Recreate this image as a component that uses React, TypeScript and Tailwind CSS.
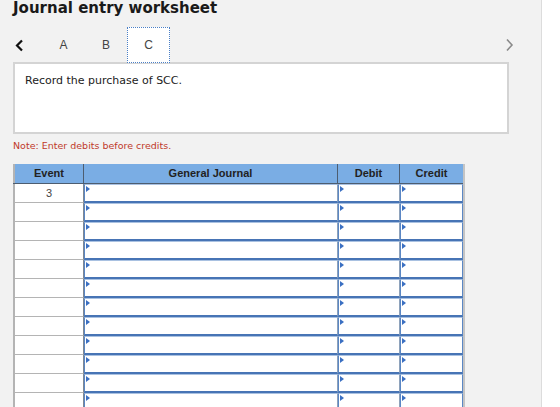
import React from "react";

const verdana = { fontFamily: '"DejaVu Sans", Verdana, sans-serif' };
const arial = { fontFamily: '"Liberation Sans", Arial, sans-serif' };

function InputCell({ last }: { last?: boolean }) {
  return (
    <div
      className={`relative h-[19px] bg-white border-t border-t-[#a9c1e1] border-b-2 border-b-[#4774b5] border-l border-l-[#5b87c4] ${
        last ? "border-r border-r-[#5b87c4]" : "border-r border-r-[#8ea2bb]"
      }`}
    >
      <div className="absolute top-[1px] left-[1px] w-0 h-0 border-y-[3px] border-y-transparent border-l-[4px] border-l-[#3a6fc2]" />
    </div>
  );
}

export default function App() {
  const rows = Array.from({ length: 12 }, (_, i) => i);
  return (
    <div className="w-[560px] h-[407px] overflow-hidden flex bg-white">
      <div className="w-[542px] shrink-0 bg-[#f2f2f2] border-r border-[#dcdcdc] pl-[13px]">
        <div
          className="text-[15px] leading-[17px] font-bold text-[#1a1a1a]"
          style={verdana}
        >
          Journal entry worksheet
        </div>

        <div className="mt-[10px] flex items-stretch h-[36px] w-[495px]" style={arial}>
          <div className="w-[29px] flex items-center pl-[2px]">
            <svg width="9" height="13" viewBox="0 0 9 13">
              <path d="M7 1.5 L2 6.5 L7 11.5" fill="none" stroke="#111" strokeWidth="2.2" />
            </svg>
          </div>
          <div className="w-[43px] flex items-center justify-center text-[12px] text-[#444]">A</div>
          <div className="w-[42px] flex items-center justify-center text-[12px] text-[#444]">B</div>
          <div className="relative z-10 w-[43px] flex items-center justify-center text-[12px] text-[#444] bg-white border border-dotted border-[#4a7fc6]">
            C
          </div>
          <div className="flex-1 flex items-center justify-end">
            <svg width="9" height="14" viewBox="0 0 9 14" className="mr-[-6px]">
              <path d="M2 1.5 L7 7 L2 12.5" fill="none" stroke="#8a8a8a" strokeWidth="1.6" />
            </svg>
          </div>
        </div>

        <div
          className="mt-[-1px] w-[496px] h-[72px] bg-white border-2 border-[#d4d4d4] pl-[10px] pt-[10px] text-[11px] leading-[14px] text-[#222]"
          style={verdana}
        >
          Record the purchase of SCC.
        </div>

        <div className="mt-[6px] text-[9.5px] leading-[12px] text-[#c0392b]" style={verdana}>
          Note: Enter debits before credits.
        </div>

        <div className="mt-[12px] w-[452px] border-r-2 border-r-[#c4c4c4]" style={arial}>
          <div className="grid grid-cols-[71px_254px_62px_63px] h-[20px] bg-[#7aade4] border-b border-b-[#4d5d70] text-[11px] font-bold text-[#222]">
            <div className="flex items-center justify-center border-l-2 border-l-[#b4b4b4] border-r border-r-[#4d5d70]">Event</div>
            <div className="flex items-center justify-center border-r border-r-[#4d5d70]">General Journal</div>
            <div className="flex items-center justify-center border-r border-r-[#4d5d70]">Debit</div>
            <div className="flex items-center justify-center">Credit</div>
          </div>
          {rows.map((i) => (
            <div key={i} className="grid grid-cols-[71px_254px_62px_63px]">
              <div className="h-[19px] bg-white border-l-2 border-l-[#b4b4b4] border-b border-b-[#b4b4b4] border-r border-r-[#7d8794] flex items-center justify-center text-[11px] text-[#444]">
                {i === 0 ? "3" : ""}
              </div>
              <InputCell />
              <InputCell />
              <InputCell last />
            </div>
          ))}
        </div>
      </div>
      <div className="flex-1 bg-white" />
    </div>
  );
}
